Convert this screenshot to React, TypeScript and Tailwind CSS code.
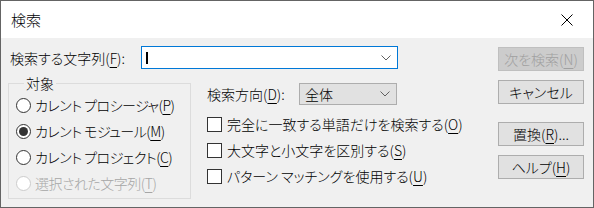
import React from 'react';

// Underlined access key letter, e.g. (F)
function Key({ children }: { children: React.ReactNode }) {
  return <span className="underline underline-offset-[3px] decoration-1">{children}</span>;
}

function Chevron() {
  return (
    <svg width="10" height="6" viewBox="0 0 10 6" fill="none">
      <polyline points="0.5,0.5 5,5 9.5,0.5" stroke="#606060" strokeWidth="1" />
    </svg>
  );
}

function Radio({ checked, disabled, children }: { checked?: boolean; disabled?: boolean; children: React.ReactNode }) {
  return (
    <div className={`flex items-center h-[26px] ${disabled ? 'text-[#a6a6a6]' : 'text-black'}`}>
      <span
        className={`flex items-center justify-center w-[15px] h-[15px] rounded-full border bg-white ${
          disabled ? 'border-[#cccccc]' : 'border-[#333333]'
        }`}
      >
        {checked && <span className="w-[9px] h-[9px] rounded-full bg-[#333333]" />}
      </span>
      <span className="ml-[4px] whitespace-nowrap tracking-[-0.5px]">{children}</span>
    </div>
  );
}

function Check({ children }: { children: React.ReactNode }) {
  return (
    <div className="flex items-center h-[26px]">
      <span className="w-[15px] h-[15px] border border-[#333333] bg-white" />
      <span className="ml-[5px] whitespace-nowrap">{children}</span>
    </div>
  );
}

function Button({ disabled, children }: { disabled?: boolean; children: React.ReactNode }) {
  return (
    <button
      className={`w-[86px] h-[24px] flex items-center justify-center border whitespace-nowrap ${
        disabled ? 'bg-[#cccccc] border-[#bfbfbf] text-[#a0a0a0]' : 'bg-[#e1e1e1] border-[#adadad] text-black'
      }`}
    >
      {children}
    </button>
  );
}

export default function App() {
  return (
    <div className="w-[594px] h-[208px] border border-[#646464] bg-[#f0f0f0] text-[14px] leading-[20px] font-light text-black font-['Noto_Sans_CJK_JP',sans-serif] [font-feature-settings:'palt'] overflow-hidden">
      {/* Title bar */}
      <div className="h-[37px] bg-white flex items-center justify-between pl-[10px] pr-[20px]">
        <span className="text-[15px]">検索</span>
        <svg width="12" height="12" viewBox="0 0 12 12">
          <line x1="0.5" y1="0.5" x2="11.5" y2="11.5" stroke="#000" strokeWidth="1" />
          <line x1="11.5" y1="0.5" x2="0.5" y2="11.5" stroke="#000" strokeWidth="1" />
        </svg>
      </div>

      <div className="flex">
        {/* Left part */}
        <div className="flex flex-col pl-[7px] pt-[8px] shrink-0">
          <div className="flex items-center h-[23px]">
            <span className="ml-[2px] w-[131px] whitespace-nowrap">
              検索する文字列(<Key>F</Key>):
            </span>
            <div className="w-[257px] h-[23px] border border-[#0078d7] bg-white flex items-center pl-[4px] pr-[6px]">
              <span className="w-[2px] h-[12px] bg-black" />
              <span className="ml-auto">
                <Chevron />
              </span>
            </div>
          </div>

          <div className="flex mt-[6px]">
            <fieldset className="w-[183px] h-[124px] shrink-0 border border-[#dcdcdc] pl-[7px]">
              <legend className="ml-[8px] px-[2px] leading-[17px]">対象</legend>
              <Radio>
                カレント プロシージャ(<Key>P</Key>)
              </Radio>
              <Radio checked>
                カレント モジュール(<Key>M</Key>)
              </Radio>
              <Radio>
                カレント プロジェクト(<Key>C</Key>)
              </Radio>
              <Radio disabled>
                選択された文字列(<Key>T</Key>)
              </Radio>
            </fieldset>

            <div className="flex flex-col ml-[16px] pt-[8px]">
              <div className="flex items-center h-[22px]">
                <span className="w-[92px] whitespace-nowrap">
                  検索方向(<Key>D</Key>):
                </span>
                <div className="w-[98px] h-[22px] border border-[#adadad] bg-[#e1e1e1] flex items-center pl-[5px] pr-[6px]">
                  <span>全体</span>
                  <span className="ml-auto">
                    <Chevron />
                  </span>
                </div>
              </div>
              <div className="mt-[6px]">
                <Check>
                  完全に一致する単語だけを検索する(<Key>O</Key>)
                </Check>
                <Check>
                  大文字と小文字を区別する(<Key>S</Key>)
                </Check>
                <Check>
                  パターン マッチングを使用する(<Key>U</Key>)
                </Check>
              </div>
            </div>
          </div>
        </div>

        {/* Buttons */}
        <div className="ml-auto pr-[9px] pt-[9px] flex flex-col">
          <Button disabled>
            次を検索(<Key>N</Key>)
          </Button>
          <div className="mt-[9px]">
            <Button>キャンセル</Button>
          </div>
          <div className="mt-[18px]">
            <Button>
              置換(<Key>R</Key>)...
            </Button>
          </div>
          <div className="mt-[9px]">
            <Button>
              ヘルプ(<Key>H</Key>)
            </Button>
          </div>
        </div>
      </div>
    </div>
  );
}
